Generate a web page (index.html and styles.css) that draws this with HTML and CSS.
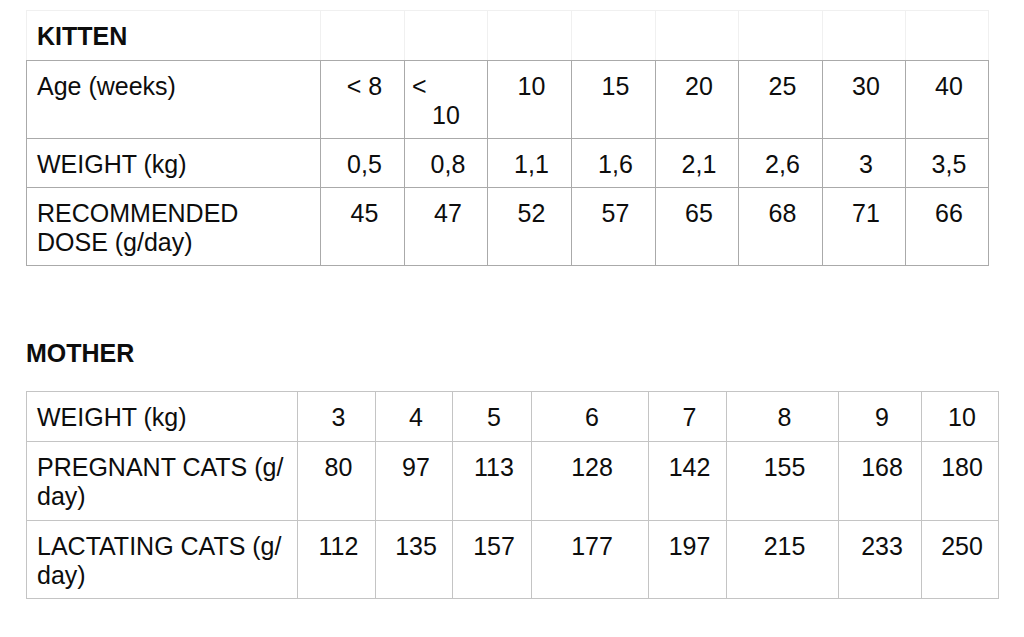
FILE: index.html
```html
<!DOCTYPE html>
<html>
<head>
<meta charset="utf-8">
<link rel="stylesheet" href="styles.css">
</head>
<body>
<table class="grid kitten">
  <colgroup>
    <col class="w294"><col class="w84"><col class="w83"><col class="w84"><col class="w84"><col class="w83"><col class="w84"><col class="w83"><col class="w83">
  </colgroup>
  <tr class="head">
    <td class="label bold">KITTEN</td><td></td><td></td><td></td><td></td><td></td><td></td><td></td><td></td>
  </tr>
  <tr>
    <td class="label">Age (weeks)</td><td>&lt; 8</td><td><div class="lt">&lt;</div><div class="ten">10</div></td><td>10</td><td>15</td><td>20</td><td>25</td><td>30</td><td>40</td>
  </tr>
  <tr>
    <td class="label">WEIGHT (kg)</td><td>0,5</td><td>0,8</td><td>1,1</td><td>1,6</td><td>2,1</td><td>2,6</td><td>3</td><td>3,5</td>
  </tr>
  <tr>
    <td class="label">RECOMMENDED DOSE (g/day)</td><td>45</td><td>47</td><td>52</td><td>57</td><td>65</td><td>68</td><td>71</td><td>66</td>
  </tr>
</table>

<h2 class="section">MOTHER</h2>

<table class="grid mother">
  <colgroup>
    <col class="w271"><col class="w78"><col class="w77"><col class="w79"><col class="w117"><col class="w78"><col class="w112"><col class="w83"><col class="w77">
  </colgroup>
  <tr>
    <td class="label">WEIGHT (kg)</td><td>3</td><td>4</td><td>5</td><td>6</td><td>7</td><td>8</td><td>9</td><td>10</td>
  </tr>
  <tr>
    <td class="label">PREGNANT CATS (g/ day)</td><td>80</td><td>97</td><td>113</td><td>128</td><td>142</td><td>155</td><td>168</td><td>180</td>
  </tr>
  <tr class="last">
    <td class="label">LACTATING CATS (g/ day)</td><td>112</td><td>135</td><td>157</td><td>177</td><td>197</td><td>215</td><td>233</td><td>250</td>
  </tr>
</table>
</body>
</html>
```
FILE: styles.css
```css
html, body {
  margin: 0;
  padding: 0;
  background: #fff;
}
body {
  font-family: "Liberation Sans", Arial, Helvetica, sans-serif;
  font-size: 25px;
  line-height: 29px;
  color: #0d0d0d;
}
.grid {
  border-collapse: collapse;
  table-layout: fixed;
  margin-left: 26px;
}
.grid td {
  padding: 11px 6px 8px 10px;
  vertical-align: top;
  text-align: center;
  overflow: hidden;
  line-height: 29px;
}
.grid td.label {
  text-align: left;
}
.bold {
  font-weight: bold;
}
.kitten {
  margin-top: 10px;
  width: 963px;
}
.kitten td {
  border: 1px solid #aaaaaa;
}
.kitten tr.head td {
  border: 1px solid #f0f0f0;
  border-bottom-color: #aaaaaa;
  height: 30px;
}
.lt {
  text-align: left;
  margin-left: -3px;
}
.ten {
  margin-left: -4px;
}
.section {
  margin: 73px 0 23px 26px;
  font-size: 25px;
  line-height: 29px;
  font-weight: bold;
}
.mother {
  width: 973px;
}
.mother td {
  border: 1px solid #c4c4c4;
  padding-bottom: 9px;
}
.mother tr.last td {
  padding-bottom: 8px;
}
.w294 { width: 294px; }
.w84 { width: 84px; }
.w83 { width: 83px; }
.w271 { width: 271px; }
.w78 { width: 78px; }
.w77 { width: 77px; }
.w79 { width: 79px; }
.w117 { width: 117px; }
.w112 { width: 112px; }
```
